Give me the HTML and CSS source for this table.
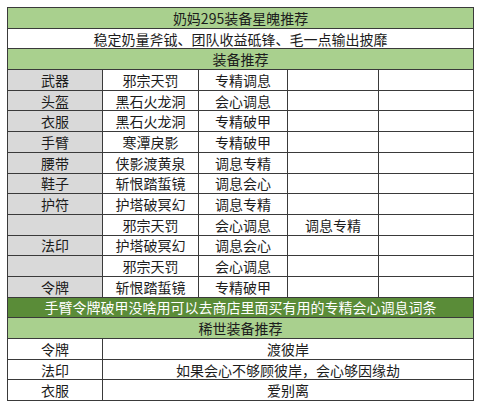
FILE: index.html
```html
<!DOCTYPE html>
<html lang="zh">
<head>
<meta charset="utf-8">
<link rel="stylesheet" href="styles.css">
</head>
<body>
<table class="sheet">
  <colgroup>
    <col class="c1"><col class="c2"><col class="c3"><col class="c4"><col class="c5">
  </colgroup>
  <tr class="head"><td colspan="5">奶妈295装备星魄推荐</td></tr>
  <tr><td colspan="5">稳定奶量斧钺、团队收益砥锋、毛一点输出披靡</td></tr>
  <tr class="head"><td colspan="5">装备推荐</td></tr>
  <tr><td class="slot">武器</td><td>邪宗天罚</td><td>专精调息</td><td></td><td></td></tr>
  <tr><td class="slot">头盔</td><td>黑石火龙洞</td><td>会心调息</td><td></td><td></td></tr>
  <tr><td class="slot">衣服</td><td>黑石火龙洞</td><td>专精破甲</td><td></td><td></td></tr>
  <tr><td class="slot">手臂</td><td>寒潭戾影</td><td>专精破甲</td><td></td><td></td></tr>
  <tr><td class="slot">腰带</td><td>侠影渡黄泉</td><td>调息专精</td><td></td><td></td></tr>
  <tr><td class="slot">鞋子</td><td>斩恨踏蜇镜</td><td>调息会心</td><td></td><td></td></tr>
  <tr><td class="slot">护符</td><td>护塔破冥幻</td><td>调息专精</td><td></td><td></td></tr>
  <tr><td class="slot"></td><td>邪宗天罚</td><td>会心调息</td><td>调息专精</td><td></td></tr>
  <tr><td class="slot">法印</td><td>护塔破冥幻</td><td>调息会心</td><td></td><td></td></tr>
  <tr><td class="slot"></td><td>邪宗天罚</td><td>会心调息</td><td></td><td></td></tr>
  <tr><td class="slot">令牌</td><td>斩恨踏蜇镜</td><td>专精破甲</td><td></td><td></td></tr>
  <tr class="note"><td colspan="5">手臂令牌破甲没啥用可以去商店里面买有用的专精会心调息词条</td></tr>
  <tr class="head"><td colspan="5">稀世装备推荐</td></tr>
  <tr><td>令牌</td><td colspan="4">渡彼岸</td></tr>
  <tr><td>法印</td><td colspan="4">如果会心不够顾彼岸，会心够因缘劫</td></tr>
  <tr><td>衣服</td><td colspan="4">爱别离</td></tr>
</table>
</body>
</html>
```
FILE: styles.css
```css
html, body {
  margin: 0;
  padding: 0;
  background: #ffffff;
}
body {
  padding: 7px;
  font-family: "Noto Sans CJK SC", "Noto Sans", sans-serif;
  font-size: 14px;
  color: #1c1c1c;
}
.sheet {
  table-layout: fixed;
  width: 466px;
  border-collapse: collapse;
}
.c1 { width: 95px; }
.c2 { width: 96px; }
.c3 { width: 89px; }
.c4 { width: 91px; }
.c5 { width: 95px; }
.sheet td {
  border: 1px solid #3a3a3a;
  padding: 0;
  height: 19.7px;
  line-height: 18px;
  text-align: center;
  white-space: nowrap;
  overflow: hidden;
}
.head td {
  background: #a9d08e;
}
.note td {
  background: #5a8c38;
  color: #ffffff;
}
.sheet td.slot {
  background: #d9d9d9;
}
```
